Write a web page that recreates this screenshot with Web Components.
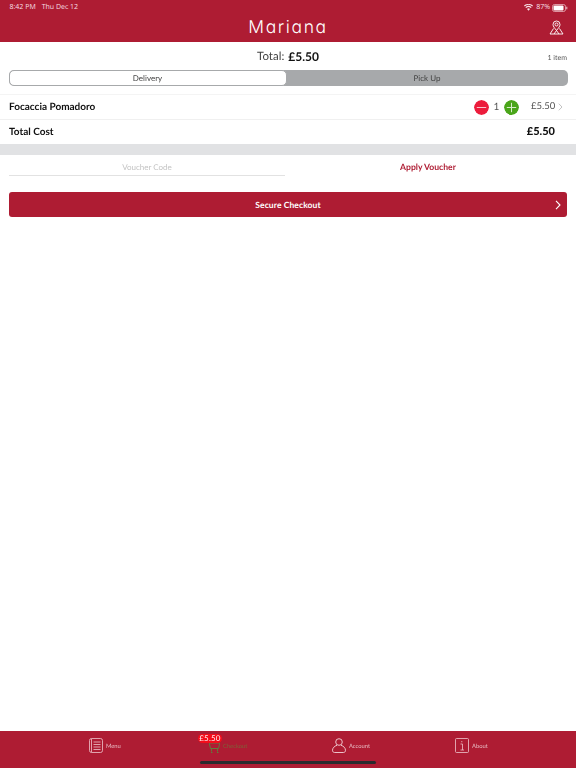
<!DOCTYPE html>
<html><head><meta charset="utf-8"><style>
html,body{margin:0;padding:0;height:100%;background:#fff}
body{font-family:Lato,"Liberation Sans",sans-serif;color:#111;text-rendering:geometricPrecision}
app-shell{height:768px;will-change:opacity}
</style></head><body>
<app-shell>
  <app-header slot="top"></app-header>
  <cart-summary total="£5.50" count="1 item"></cart-summary>
  <mode-switch></mode-switch>
  <cart-line name="Focaccia Pomadoro" qty="1" price="£5.50"></cart-line>
  <cost-total></cost-total>
  <voucher-form></voucher-form>
  <checkout-button></checkout-button>
  <tab-bar slot="bottom"></tab-bar>
</app-shell>
<script>
function el(name,css,html){
  customElements.define(name,class extends HTMLElement{
    connectedCallback(){
      if(this.shadowRoot)return;
      const a=k=>this.getAttribute(k)||'';
      this.attachShadow({mode:'open'}).innerHTML='<style>'+css+'</style>'+(typeof html==='function'?html(a):html);
    }
  });
}
el('app-shell',':host{display:flex;flex-direction:column;width:576px}main{flex:1;display:flex;flex-direction:column}',
 '<slot name="top"></slot><main><slot></slot></main><slot name="bottom"></slot>');
el('app-header',`:host{display:block;background:#ae1c33;height:42px;color:#fff;position:relative}
.status{display:flex;justify-content:space-between;align-items:center;height:14px;padding:1px 8px 0 9.500px;box-sizing:border-box;font:400 7px/13px "Open Sans",sans-serif;color:#f6dfe3}
.status span+span{margin-left:6px}
.right{display:flex;align-items:center;gap:2px}
.bar{display:flex;align-items:center;justify-content:center;height:28px;position:relative}
.logo{font:300 17.500px/28px Inter,sans-serif;font-feature-settings:"cv11";letter-spacing:1.600px}
.pin{position:absolute;right:12px;top:6px}`,
`<div class="status"><div><span>8:42 PM</span><span>Thu Dec 12</span></div>
<div class="right"><svg width="9" height="7" viewBox="0 0 18 14"><path d="M9 13.500 6 10a4.500 4.500 0 0 1 6 0zM4.400 8.200 2.700 6.300a9.500 9.500 0 0 1 12.600 0l-1.700 1.900a7 7 0 0 0-9.200 0zM1.500 5 0 3.200a13.500 13.500 0 0 1 18 0L16.500 5a11.300 11.300 0 0 0-15 0z" fill="#f6dfe3"/></svg>
<span style="margin-left:1px">87%</span>
<svg width="16" height="8" viewBox="0 0 16 8"><rect x=".5" y=".5" width="13" height="7" rx="2" fill="none" stroke="#f0c9d0" stroke-width=".7"/><rect x="1.500" y="1.500" width="10" height="5" rx="1" fill="#fff"/><rect x="14.300" y="2.700" width="1" height="2.600" fill="#f0c9d0"/></svg></div></div>
<div class="bar"><span class="logo">Mariana</span>
<svg class="pin" width="15" height="15" viewBox="0 0 15 15" fill="none" stroke="#fff" stroke-width=".9"><path d="M7.500 10.500C5.500 8 4 6.300 4 4.500a3.500 3.500 0 0 1 7 0c0 1.800-1.500 3.500-3.500 6z"/><circle cx="7.500" cy="4.500" r="1.500"/><path d="M4.500 8.500 1 14h13l-3.500-5.500M5 14l2.500-3.500L10 14"/></svg></div>`);
el('cart-summary',`:host{display:block;height:28px;position:relative}
.t{display:flex;justify-content:center;align-items:center;gap:4px;height:28px;font-size:11.500px;color:#444}
b{font-weight:700;color:#111;font-size:12px}
.c{position:absolute;right:9px;top:10.500px;font-size:7px;line-height:11px;color:#555}`,
a=>`<div class="t"><span>Total:</span><b>${a('total')}</b></div><div class="c">${a('count')}</div>`);
el('mode-switch',`:host{display:flex;height:16px;margin:0 8.500px;border-radius:5px;background:#a7a9ab;box-sizing:border-box;font-size:8px;color:#444}
div{flex:1;display:flex;align-items:center;justify-content:center;box-sizing:border-box}
.on{flex:0 0 278px;background:#fff;border:1.500px solid #a7a9ab;border-radius:5px}`,
'<div class="on">Delivery</div><div>Pick Up</div>');
el('cart-line',`:host{display:flex;align-items:center;height:24px;margin-top:8px;padding:0 9px;border-top:1px solid #f4f4f4;border-bottom:1px solid #f0f0f0;box-sizing:content-box;font-size:10px}
.n{flex:1;font-weight:700;color:#111;padding-bottom:1px}
.b{width:15px;height:15px;border-radius:50%}
.q{width:15px;text-align:center;font-size:10px;color:#555;padding-bottom:1px}
.p{margin-left:12px;font-size:9.500px;color:#555;width:24px;padding-bottom:1px}
.a{margin-left:3px;margin-right:4px}`,
a=>`<div class="n">${a('name')}</div>
<svg class="b" viewBox="0 0 15 15"><circle cx="7.500" cy="7.500" r="7.500" fill="#ec1c3c"/><rect x="2.800" y="7" width="9.400" height="1" fill="#f7c4cd"/></svg>
<div class="q">${a('qty')}</div>
<svg class="b" viewBox="0 0 15 15"><circle cx="7.500" cy="7.500" r="7.500" fill="#4aa51a"/><rect x="2.800" y="7" width="9.400" height="1" fill="#d8eccb"/><rect x="7" y="2.800" width="1" height="9.400" fill="#d8eccb"/></svg>
<div class="p">${a('price')}</div>
<svg class="a" width="5" height="8" viewBox="0 0 5 8" fill="none" stroke="#bbb" stroke-width=".9"><path d="M.8.7 4 4 .8 7.300"/></svg>`);
el('cost-total',`:host{display:flex;align-items:center;justify-content:space-between;height:23px;padding:0 21px 1px 9px;font-weight:700;font-size:10px;color:#111;border-bottom:11px solid #e1e2e4}
b{font-size:11px}`,'<span>Total Cost</span><b>£5.50</b>');
el('voucher-form',`:host{display:flex;height:37px;padding:0 9px;box-sizing:border-box;font-size:8px}
.i{flex:0 0 276px;height:20px;line-height:24px;text-align:center;color:#c4c4c4;border-bottom:1px solid #e2e2e2}
.a{flex:1;height:24px;line-height:25px;text-align:center;color:#ae1c33;font-weight:700;font-size:8.600px;padding-left:4px}`,
'<div class="i">Voucher Code</div><div class="a">Apply Voucher</div>');
el('checkout-button',`:host{display:flex;align-items:center;justify-content:center;height:25px;margin:0 9px;background:#ae1c33;border-radius:3px;color:#fff;font-weight:700;font-size:8.500px;position:relative;letter-spacing:.1px}
svg{position:absolute;right:6px;top:8px}`,
'Secure Checkout<svg width="6" height="10" viewBox="0 0 6 10" fill="none" stroke="#fff" stroke-width="1.100"><path d="M1 .8 5 5 1 9.200"/></svg>');
el('tab-bar',`:host{display:block;height:37px;background:#ae1c33;position:relative;font-size:5.800px;color:#e8bcc4}
.t{position:absolute;top:7px;display:flex;align-items:center;gap:3px;height:15px}
.t span{margin-top:2px}
.price{position:absolute;left:198px;top:3px;width:24px;height:9px;background:#f40d1b;border-radius:4.500px;color:#fbe9ec;font:400 8px/9px Lato,sans-serif;text-align:center;letter-spacing:.2px}
.home{position:absolute;left:200px;width:176px;top:30px;height:3px;border-radius:2px;background:#2a2a2e}
.muted{color:#7d6238}`,
`<div class="t" style="left:89px"><svg width="14" height="15" viewBox="0 0 14 15" fill="none" stroke="#eec5cc" stroke-width=".8"><rect x=".5" y=".5" width="13" height="14" rx="2"/><path d="M2.500.8v13.400M4.500 4h7M4.500 6.500h7M4.500 9h7M4.500 11.500h7"/></svg><span>Menu</span></div>
<div class="t" style="left:209px"><svg width="11" height="11" viewBox="0 0 11 11" fill="none" stroke="#5f7d3c" stroke-width="1" style="margin-top:3px"><path d="M.2 1h10.600L9.500 6.500h-8zM2.500 6.500v3M8.500 6.500v3M2 10.500h1.500M8 10.500h1.500"/></svg><span class="muted">Checkout</span></div>
<div class="price">£5.50</div>
<div class="t" style="left:332px"><svg width="14" height="15" viewBox="0 0 14 15" fill="none" stroke="#f3d5da" stroke-width=".9"><circle cx="7" cy="4" r="3.300"/><path d="M5 7.300C2.500 8 .5 10 .5 12.300c0 1.500 1 2.200 2 2.200h9c1 0 2-.7 2-2.200C13.500 10 11.500 8 9 7.300"/></svg><span>Account</span></div>
<div class="t" style="left:455px"><svg width="14" height="15" viewBox="0 0 14 15" fill="none" stroke="#eec5cc" stroke-width=".8"><rect x=".5" y=".5" width="13" height="14" rx="1"/><path d="M5.500 6h2v6M5.500 12h3.500M6.800 3v1.300"/></svg><span>About</span></div>
<div class="home"></div>`);
</script>
</body></html>
